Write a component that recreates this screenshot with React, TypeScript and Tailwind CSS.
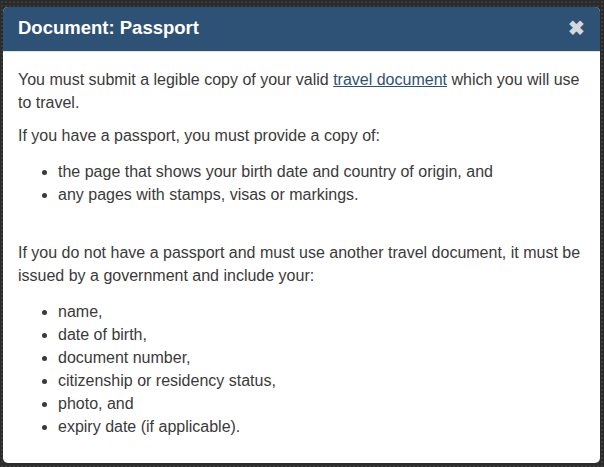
import React from "react";

export default function App() {
  return (
    <div
      className="w-[604px] h-[467px] bg-[#2b2b2b] pt-[7px] pl-[3px] overflow-hidden"
      style={{ backgroundImage: "radial-gradient(#3a3a3a 1px, transparent 1px)", backgroundSize: "4px 4px" }}
    >
      <div className="w-[597px] h-[456px] bg-white rounded-[5px] overflow-hidden font-['Liberation_Sans',Arial,sans-serif]">
        <div className="h-[45px] bg-[#2d5276] border-b border-[#dde3ea] flex items-center justify-between pl-[15px] pr-[15px]">
          <h4 className="text-white font-bold text-[18.5px] leading-none mt-[-1px]">Document: Passport</h4>
          <button className="text-[#d4d8dc] text-[20px] font-bold leading-none mt-[-2px]">✖</button>
        </div>
        <div className="px-[15px] pt-[16px] pb-[15px] text-[#3a3a3a] text-[16px] leading-[23px]">
          <p className="mb-[10px]">
            You must submit a legible copy of your valid{" "}
            <a className="text-[#2d5276] underline">travel document</a> which you will use to travel.
          </p>
          <p className="mb-[13px]">If you have a passport, you must provide a copy of:</p>
          <ul className="list-disc pl-[40px] mb-[10px]">
            <li>the page that shows your birth date and country of origin, and</li>
            <li>any pages with stamps, visas or markings.</li>
          </ul>
          <p className="h-[25px]"></p>
          <p className="mb-[13px]">
            If you do not have a passport and must use another travel document, it must be issued by a government and include your:
          </p>
          <ul className="list-disc pl-[40px] mb-[10px]">
            <li>name,</li>
            <li>date of birth,</li>
            <li>document number,</li>
            <li>citizenship or residency status,</li>
            <li>photo, and</li>
            <li>expiry date (if applicable).</li>
          </ul>
        </div>
      </div>
    </div>
  );
}
